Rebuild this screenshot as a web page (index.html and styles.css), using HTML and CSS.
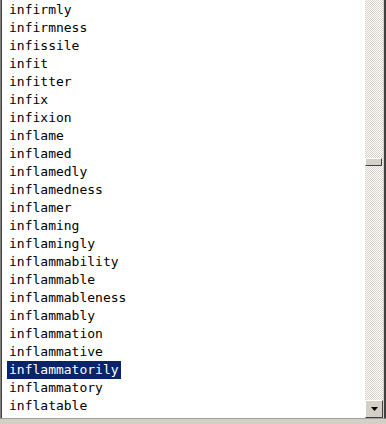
FILE: index.html
```html
<!DOCTYPE html>
<html>
	<head>
		<link rel="stylesheet" href="styles.css">
	</head>
	<body>
		<div id="frame">
			<div id="listbox">
				<ul id="items">
					<li>infirmly</li>
					<li>infirmness</li>
					<li>infissile</li>
					<li>infit</li>
					<li>infitter</li>
					<li>infix</li>
					<li>infixion</li>
					<li>inflame</li>
					<li>inflamed</li>
					<li>inflamedly</li>
					<li>inflamedness</li>
					<li>inflamer</li>
					<li>inflaming</li>
					<li>inflamingly</li>
					<li>inflammability</li>
					<li>inflammable</li>
					<li>inflammableness</li>
					<li>inflammably</li>
					<li>inflammation</li>
					<li>inflammative</li>
					<li><span class="selected">inflammatorily</span></li>
					<li>inflammatory</li>
					<li>inflatable</li>
				</ul>
				<div id="scrollbar">
					<div id="track"><div id="thumb"></div></div>
					<div id="btnDown">
						<svg width="7" height="4" viewBox="0 0 7 4"><path d="M0 0h7L3.5 4z" fill="#000"/></svg>
					</div>
				</div>
			</div>
		</div>
	</body>
</html>
```
FILE: styles.css
```css
html, body{
	margin:0;
	padding:0;
	background-color:#d4d0c8;
}

#frame{
	width:383px;
	height:418px;
	border-left:1px solid #808080;
	border-bottom:1px solid #a0a0a0;
	border-right:3px solid #404040;
	background-color:#d4d0c8;
}

#listbox{
	display:flex;
	height:418px;
	border-left:1px solid #404040;
	background-color:#fff;
}

#items{
	flex:1;
	list-style:none;
	margin:0;
	padding:1px 0 0 5px;
	font-family:"DejaVu Sans Mono", monospace;
	font-size:13px;
	color:#000;
}

#items li{
	height:18px;
	line-height:18px;
	padding-left:2px;
	white-space:nowrap;
}

#items .selected{
	display:inline-block;
	margin-left:-2px;
	padding:0 2px;
	background-color:#0a246a;
	color:#fff;
}

#scrollbar{
	width:18px;
	display:flex;
	flex-direction:column;
	border-right:1px solid #d4d0c8;
}

#track{
	flex:1;
	padding-top:158px;
	background:repeating-conic-gradient(#d4d0c8 0 25%, #fff 0 50%) 0 0/2px 2px;
}

#thumb{
	height:6px;
	width:16px;
	background-color:#d4d0c8;
	border-top:1px solid #fff;
	border-left:1px solid #fff;
	border-right:1px solid #404040;
	border-bottom:1px solid #404040;
	box-sizing:content-box;
	width:15px;
}

#btnDown{
	height:16px;
	display:flex;
	align-items:center;
	justify-content:center;
	background-color:#d4d0c8;
	border-top:1px solid #fff;
	border-left:1px solid #fff;
	border-right:1px solid #404040;
	border-bottom:1px solid #404040;
}
```
